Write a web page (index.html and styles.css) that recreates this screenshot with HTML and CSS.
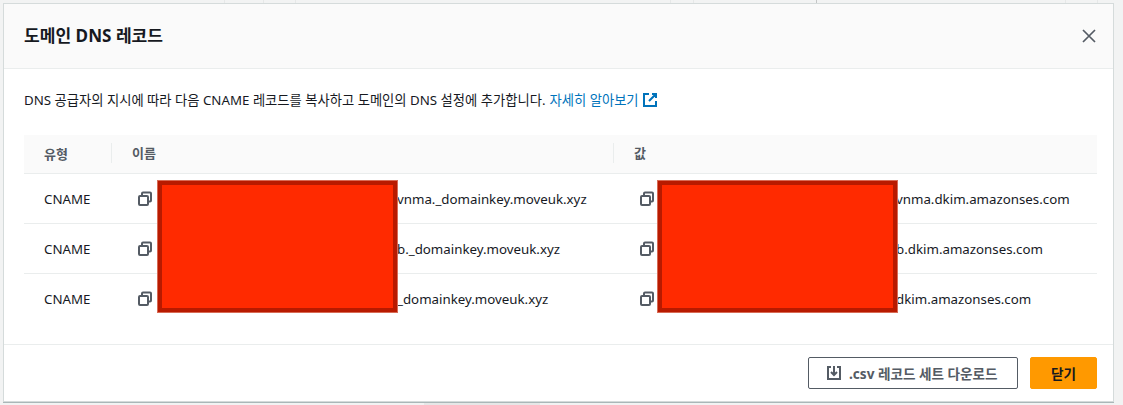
FILE: index.html
```html
<!DOCTYPE html>
<html lang="ko">
<head>
  <meta charset="UTF-8">
  <meta name="viewport" content="width=device-width, initial-scale=1.0">
  <title>도메인 DNS 레코드</title>
  <link rel="stylesheet" href="styles.css">
</head>
<body>
  <!-- bits of the page behind the dialog -->
  <div class="behind">
    <i class="tick t1"></i><i class="tick t2"></i><i class="tick t3"></i><i class="tick t4"></i>
    <i class="tick t5"></i><i class="tick t6 dark"></i><i class="tick t7"></i><i class="tick t8"></i>
    <i class="smudge"></i>
  </div>

  <div class="modal">
    <div class="modal-header">
      <h2>도메인 DNS 레코드</h2>
      <svg class="close-icon" width="16" height="16" viewBox="0 0 16 16"><path d="M2 2l12 12M14 2L2 14"/></svg>
    </div>

    <div class="modal-body">
      <p class="intro">DNS 공급자의 지시에 따라 다음 CNAME 레코드를 복사하고 도메인의 DNS 설정에 추가합니다. <a href="#">자세히 알아보기</a>
        <svg class="ext-icon" width="16" height="16" viewBox="0 0 16 16"><path d="M10 2h4v4M14 2L7 9M7 2H2v12h12V9"/></svg>
      </p>

      <div class="records">
        <div class="row head">
          <div class="cell">유형</div>
          <div class="cell divided">이름</div>
          <div class="cell divided">값</div>
        </div>
        <div class="row">
          <div class="cell">CNAME</div>
          <div class="cell copy"><svg class="copy-icon" width="16" height="16" viewBox="0 0 16 16"><path d="M5 5V2.5q0-1 1-1h7q1 0 1 1v7q0 1-1 1h-2M3 5h7q1 0 1 1v7q0 1-1 1H3q-1 0-1-1V6q0-1 1-1z"/></svg><span class="masked"></span>vnma._domainkey.moveuk.xyz</div>
          <div class="cell copy value"><svg class="copy-icon" width="16" height="16" viewBox="0 0 16 16"><path d="M5 5V2.5q0-1 1-1h7q1 0 1 1v7q0 1-1 1h-2M3 5h7q1 0 1 1v7q0 1-1 1H3q-1 0-1-1V6q0-1 1-1z"/></svg><span class="masked"></span>vnma.dkim.amazonses.com</div>
        </div>
        <div class="row">
          <div class="cell">CNAME</div>
          <div class="cell copy"><svg class="copy-icon" width="16" height="16" viewBox="0 0 16 16"><path d="M5 5V2.5q0-1 1-1h7q1 0 1 1v7q0 1-1 1h-2M3 5h7q1 0 1 1v7q0 1-1 1H3q-1 0-1-1V6q0-1 1-1z"/></svg><span class="masked"></span>b._domainkey.moveuk.xyz</div>
          <div class="cell copy value"><svg class="copy-icon" width="16" height="16" viewBox="0 0 16 16"><path d="M5 5V2.5q0-1 1-1h7q1 0 1 1v7q0 1-1 1h-2M3 5h7q1 0 1 1v7q0 1-1 1H3q-1 0-1-1V6q0-1 1-1z"/></svg><span class="masked"></span>b.dkim.amazonses.com</div>
        </div>
        <div class="row last">
          <div class="cell">CNAME</div>
          <div class="cell copy"><svg class="copy-icon" width="16" height="16" viewBox="0 0 16 16"><path d="M5 5V2.5q0-1 1-1h7q1 0 1 1v7q0 1-1 1h-2M3 5h7q1 0 1 1v7q0 1-1 1H3q-1 0-1-1V6q0-1 1-1z"/></svg><span class="masked"></span>_domainkey.moveuk.xyz</div>
          <div class="cell copy value"><svg class="copy-icon" width="16" height="16" viewBox="0 0 16 16"><path d="M5 5V2.5q0-1 1-1h7q1 0 1 1v7q0 1-1 1h-2M3 5h7q1 0 1 1v7q0 1-1 1H3q-1 0-1-1V6q0-1 1-1z"/></svg><span class="masked"></span>dkim.amazonses.com</div>
        </div>
        <div class="redact redact-name"></div>
        <div class="redact redact-value"></div>
      </div>
    </div>

    <div class="modal-footer">
      <button class="btn">
        <svg class="dl-icon" width="16" height="16" viewBox="0 0 16 16"><path d="M5 2H2v12h12V2h-3M8 1v9M5 7l3 3 3-3"/></svg>
        .csv 레코드 세트 다운로드
      </button>
      <button class="btn primary">닫기</button>
    </div>
  </div>
</body>
</html>
```

FILE: styles.css
```css
* {
  margin: 0;
  padding: 0;
  box-sizing: border-box;
}
html, body {
  height: 100%;
  overflow: hidden;
}
body {
  background: #f2f3f3;
  padding: 4px 10px 0 4px;
  font-family: "Noto Sans", "Noto Sans CJK KR", sans-serif;
  font-size: 13.3px;
  color: #16191f;
}
.behind .tick {
  position: absolute;
  top: 0;
  width: 1px;
  height: 3px;
  background: #e6e8e8;
}
.behind .tick.dark {
  background: #c4c6c6;
}
.t1 { left: 224px; }
.t2 { left: 263px; }
.t3 { left: 295px; }
.t4 { left: 670px; }
.t5 { left: 693px; }
.t6 { left: 816px; }
.t7 { left: 1065px; }
.t8 { left: 1097px; }
.behind .smudge {
  position: absolute;
  left: 424px;
  top: 402px;
  width: 116px;
  height: 3px;
  background: #e6e7e7;
}
.modal {
  position: relative;
  height: 397px;
  background: #fff;
  box-shadow: 0 0 0 1px #d5dbdb, 0 1px 0 1px #aab7b8;
  display: flex;
  flex-direction: column;
}
.modal-header {
  height: 65px;
  background: #fafafa;
  border-bottom: 1px solid #eaeded;
  padding: 0 16px 0 20px;
  display: flex;
  justify-content: space-between;
  align-items: center;
}
.modal-header h2 {
  font-size: 17.1px;
  font-weight: 700;
  line-height: 24px;
}
.close-icon path {
  fill: none;
  stroke: #545b64;
  stroke-width: 1.7;
}
.modal-body {
  flex-grow: 1;
  padding: 20px 16px 0 20px;
}
.intro {
  line-height: 22px;
  height: 22px;
  white-space: nowrap;
  display: flex;
  align-items: center;
  gap: 1px;
}
.intro a {
  color: #0073bb;
  text-decoration: none;
  margin-left: 3px;
}
.ext-icon {
  margin-left: 2px;
}
.ext-icon path {
  fill: none;
  stroke: #0073bb;
  stroke-width: 2;
}
.records {
  position: relative;
  margin-top: 24px;
}
.row {
  display: grid;
  grid-template-columns: 87px 502px 1fr;
  height: 50px;
  border-bottom: 1px solid #eaeded;
  align-items: center;
}
.row.last {
  height: 49px;
  border-bottom: none;
}
.row.head {
  height: 39px;
  padding-bottom: 2px;
  background: #fafafa;
  font-weight: 700;
  font-size: 13px;
  color: #545b64;
}
.cell {
  padding-left: 20px;
  white-space: nowrap;
}
.cell.divided {
  border-left: 1px solid #eaeded;
  line-height: 20px;
}
.cell.copy {
  display: flex;
  align-items: center;
  padding-left: 26px;
}
.masked {
  width: 244px;
  flex-shrink: 0;
}
.value .masked {
  width: 241px;
}
.copy-icon path {
  fill: none;
  stroke: #545b64;
  stroke-width: 2;
}
.redact {
  position: absolute;
  top: 45px;
  width: 241px;
  height: 133px;
  background: #ff2a00;
  border: 5px solid #b81a00;
  outline: 1px solid #d86b55;
  outline-offset: -1px;
}
.redact-name {
  left: 133px;
}
.redact-value {
  left: 633px;
}
.modal-footer {
  height: 57px;
  border-top: 1px solid #eaeded;
  padding: 12px 16px 0 0;
  display: flex;
  justify-content: flex-end;
  gap: 12px;
}
.btn {
  width: 210px;
  height: 32px;
  padding: 0 0 0 17px;
  background: #fff;
  border: 1px solid #545b64;
  border-radius: 2px;
  font-family: inherit;
  font-size: 13.6px;
  font-weight: 700;
  color: #545b64;
  display: flex;
  align-items: center;
  gap: 7px;
  white-space: nowrap;
}
.btn.primary {
  width: 67px;
  justify-content: center;
  padding: 0;
  background: #ff9900;
  border-color: #ff9900;
  color: #16191f;
}
.dl-icon path {
  fill: none;
  stroke: #545b64;
  stroke-width: 2;
}
```
